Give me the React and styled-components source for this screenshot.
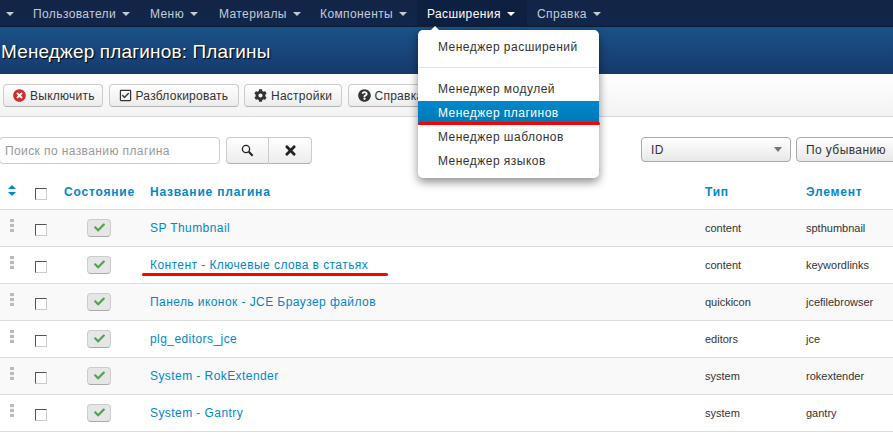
import React from "react";
import styled, { createGlobalStyle } from "styled-components";
import { FaCheck, FaCog, FaQuestionCircle, FaRegCheckSquare, FaTimes, FaTimesCircle } from "react-icons/fa";

const GlobalStyle = createGlobalStyle`
  html, body {
    margin: 0;
    width: 893px;
    height: 436px;
    overflow: hidden;
    background: #fff;
    font-family: "Liberation Sans", Arial, sans-serif;
    font-size: 12px;
    color: #333;
  }
  * { box-sizing: border-box; }
`;

const Page = styled.div`
  position: relative;
  width: 893px;
  height: 436px;
  overflow: hidden;
`;

const TopBar = styled.nav`
  height: 27px;
  display: flex;
  background: linear-gradient(#132547, #10264b);
  border-bottom: 1px solid #0b1a33;
`;

const TopItem = styled.div`
  height: 27px;
  flex: none;
  width: ${(p) => p.$w}px;
  display: flex;
  align-items: center;
  gap: 6px;
  padding: ${(p) => p.$pad || "0 0 0 10px"};
  color: ${(p) => (p.$active ? "#fff" : "#c4cbd6")};
  background: ${(p) => (p.$active ? "#0e2040" : "transparent")};
  letter-spacing: 0.4px;
`;

const Caret = styled.i`
  display: block;
  width: 0;
  height: 0;
  border: 4px solid transparent;
  border-top-color: ${(p) => (p.$active ? "#fff" : "#c4cbd6")};
  border-bottom-width: 0;
`;

const TitleBar = styled.header`
  height: 47px;
  display: flex;
  align-items: center;
  padding: 3px 1px 0;
  background: linear-gradient(#1a5288, #17396d);
`;

const Title = styled.h1`
  margin: 0;
  color: #fff;
  font-size: 19px;
  font-weight: 400;
  letter-spacing: 0.15px;
  text-shadow: 1px 1px 1px #000;
`;

const Toolbar = styled.div`
  height: 43px;
  display: flex;
  gap: 5.5px;
  padding: 10px 3px 0;
  background: linear-gradient(#fff, #f3f3f3);
  border-bottom: 1px solid #d8d8d8;
`;

const ToolButton = styled.button`
  width: ${(p) => p.$w}px;
  height: 23px;
  flex: none;
  display: flex;
  align-items: center;
  gap: 4px;
  padding: 0 0 0 9px;
  border: 1px solid #ccc;
  border-bottom-color: #b3b3b3;
  border-radius: 4px;
  background: linear-gradient(#fff, #ececec);
  color: #333;
  font: inherit;
  letter-spacing: 0.25px;
  white-space: nowrap;
  overflow: hidden;
  svg { flex: none; }
`;

const Filters = styled.div`
  height: 54px;
  display: flex;
  align-items: flex-start;
  padding-top: 20px;
`;

const SearchInput = styled.div`
  width: 221px;
  height: 27px;
  flex: none;
  margin-left: -1px;
  padding: 0 5px;
  display: flex;
  align-items: center;
  border: 1px solid #ccc;
  border-radius: 4px;
  color: #999;
  letter-spacing: 0.4px;
`;

const SearchGroup = styled.div`
  display: flex;
  flex: none;
  margin-left: 6px;
  height: 27px;
`;

const SearchButton = styled.button`
  width: ${(p) => p.$w}px;
  display: flex;
  align-items: center;
  justify-content: center;
  padding: 0;
  color: #222;
  border: 1px solid #ccc;
  border-left-width: ${(p) => (p.$joined ? 0 : 1)}px;
  border-bottom-color: #b3b3b3;
  border-radius: ${(p) => (p.$joined ? "0 4px 4px 0" : "4px 0 0 4px")};
  background: linear-gradient(#fff, #ececec);
`;

const Select = styled.div`
  width: ${(p) => p.$w}px;
  height: 25px;
  flex: none;
  margin-left: ${(p) => p.$ml}px;
  padding: 0 8px 0 9px;
  display: flex;
  align-items: center;
  justify-content: space-between;
  border: 1px solid #aaa;
  border-radius: 4px;
  background: linear-gradient(#fff, #e8e8e8);
  letter-spacing: 0.4px;
  white-space: nowrap;
`;

const SelectArrow = styled.i`
  width: 0;
  height: 0;
  border: 4px solid transparent;
  border-top: 5px solid #777;
  border-bottom-width: 0;
`;

const Table = styled.table`
  width: 893px;
  table-layout: fixed;
  border-collapse: collapse;
`;

const Th = styled.th`
  height: 38px;
  padding: 5px 0 0;
  padding-left: ${(p) => p.$pl || 0}px;
  text-align: left;
  color: #0088cc;
  font-weight: 700;
  letter-spacing: 0.8px;
  border-bottom: 1px solid #ddd;
`;

const Row = styled.tr`
  background: ${(p) => (p.$odd ? "#f9f9f9" : "#fff")};
`;

const Td = styled.td`
  height: 37px;
  padding: 0;
  text-align: ${(p) => p.$align || "left"};
  border-bottom: 1px solid #ddd;
  white-space: nowrap;
`;

const Handle = styled.span`
  display: block;
  width: 4px;
  height: 13px;
  margin: -4px 0 0 10px;
  background: repeating-linear-gradient(#bbb 0 3px, #f4f4f4 3px 5px);
`;

const Box = styled.span`
  display: block;
  width: 12px;
  height: 12px;
  margin: ${(p) => (p.$head ? "3px" : "5px")} 0 0 10px;
  background: #fff;
  border: 1px solid;
  border-color: #555 #ccc #ccc #555;
`;

const StateButton = styled.span`
  display: inline-flex;
  align-items: center;
  justify-content: center;
  width: 24px;
  height: 18px;
  vertical-align: middle;
  color: #51a351;
  border: 1px solid #ccc;
  border-bottom-color: #aaa;
  border-radius: 4px;
  background: #e6e6e6;
`;

const PluginLink = styled.a`
  color: #0088cc;
  letter-spacing: 0.43px;
`;

const Meta = styled.span`
  font-size: 11px;
`;

const Dropdown = styled.ul`
  position: absolute;
  left: 418px;
  top: 30px;
  width: 181px;
  height: 148px;
  margin: 0;
  padding: 5px 0;
  list-style: none;
  background: #fff;
  border-radius: 5px;
  box-shadow: 0 4px 10px rgba(0, 0, 0, 0.45);

  &::before {
    content: "";
    position: absolute;
    top: -4px;
    left: 12px;
    border: 5px solid transparent;
    border-top-width: 0;
    border-bottom-color: #fff;
  }
`;

const DropItem = styled.li`
  height: 24px;
  padding-left: 20px;
  display: flex;
  align-items: center;
  color: ${(p) => (p.$active ? "#fff" : "#333")};
  background: ${(p) => (p.$active ? "linear-gradient(#0088cc, #0077b3)" : "transparent")};
  letter-spacing: 0.48px;
`;

const Divider = styled.li`
  height: 1px;
  margin: 8px 1px 9px;
  background: #e5e5e5;
`;

const RedLine = styled.div`
  position: absolute;
  left: ${(p) => p.$x}px;
  top: ${(p) => p.$y}px;
  width: ${(p) => p.$w}px;
  height: 3px;
  background: #f00;
  border-radius: 2px;
`;

const menu = [
  ["Пользователи", 117],
  ["Меню", 69],
  ["Материалы", 101],
  ["Компоненты", 107],
  ["Расширения", 110, true],
  ["Справка", 90],
];

const plugins = [
  ["SP Thumbnail", "content", "spthumbnail"],
  ["Контент - Ключевые слова в статьях", "content", "keywordlinks"],
  ["Панель иконок - JCE Браузер файлов", "quickicon", "jcefilebrowser"],
  ["plg_editors_jce", "editors", "jce"],
  ["System - RokExtender", "system", "rokextender"],
  ["System - Gantry", "system", "gantry"],
];

const SearchIcon = () => (
  <svg width="13" height="13" viewBox="0 0 13 13" fill="none" stroke="#222">
    <circle cx="5" cy="5" r="3.6" strokeWidth="1.3" />
    <path d="M7.8 7.8 L11.6 11.8" strokeWidth="2" />
  </svg>
);

const SortIcon = () => (
  <svg width="8" height="11" viewBox="0 0 8 11" fill="#0088cc">
    <path d="M4 0 L8 4 H0 Z M0 7 H8 L4 11 Z" />
  </svg>
);

export default function App() {
  return (
    <Page>
      <GlobalStyle />
      <TopBar>
        <TopItem $w={23} $pad="0 0 0 6px">
          <Caret />
        </TopItem>
        {menu.map(([label, width, active]) => (
          <TopItem key={label} $w={width} $active={active}>
            {label}
            <Caret $active={active} />
          </TopItem>
        ))}
      </TopBar>
      <TitleBar>
        <Title>Менеджер плагинов: Плагины</Title>
      </TitleBar>
      <Toolbar>
        <ToolButton $w={100}>
          <FaTimesCircle size={13} color="#c9302c" />
          Выключить
        </ToolButton>
        <ToolButton $w={130}>
          <FaRegCheckSquare size={13} />
          Разблокировать
        </ToolButton>
        <ToolButton $w={98}>
          <FaCog size={13} />
          Настройки
        </ToolButton>
        <ToolButton $w={90}>
          <FaQuestionCircle size={13} />
          Справка
        </ToolButton>
      </Toolbar>
      <Filters>
        <SearchInput>Поиск по названию плагина</SearchInput>
        <SearchGroup>
          <SearchButton $w={43}>
            <SearchIcon />
          </SearchButton>
          <SearchButton $w={43} $joined>
            <FaTimes size={15} />
          </SearchButton>
        </SearchGroup>
        <Select $w={150} $ml={329}>
          ID
          <SelectArrow />
        </Select>
        <Select $w={120} $ml={5}>
          По убыванию
        </Select>
      </Filters>
      <Table>
        <colgroup>
          <col width="25" />
          <col width="35" />
          <col width="78" />
          <col width="12" />
          <col width="555" />
          <col width="101" />
          <col width="87" />
        </colgroup>
        <thead>
          <tr>
            <Th $pl={8}>
              <SortIcon />
            </Th>
            <Th>
              <Box $head />
            </Th>
            <Th $pl={4}>Состояние</Th>
            <Th />
            <Th>Название плагина</Th>
            <Th>Тип</Th>
            <Th>Элемент</Th>
          </tr>
        </thead>
        <tbody>
          {plugins.map(([name, type, element], i) => (
            <Row key={name} $odd={i % 2 === 0}>
              <Td>
                <Handle />
              </Td>
              <Td>
                <Box />
              </Td>
              <Td $align="center">
                <StateButton>
                  <FaCheck size={11} />
                </StateButton>
              </Td>
              <Td />
              <Td>
                <PluginLink>{name}</PluginLink>
              </Td>
              <Td>
                <Meta>{type}</Meta>
              </Td>
              <Td>
                <Meta>{element}</Meta>
              </Td>
            </Row>
          ))}
        </tbody>
      </Table>
      <Dropdown>
        <DropItem>Менеджер расширений</DropItem>
        <Divider />
        <DropItem>Менеджер модулей</DropItem>
        <DropItem $active>Менеджер плагинов</DropItem>
        <DropItem>Менеджер шаблонов</DropItem>
        <DropItem>Менеджер языков</DropItem>
      </Dropdown>
      <RedLine $x={418} $y={122} $w={182} />
      <RedLine $x={142} $y={273} $w={246} />
    </Page>
  );
}
